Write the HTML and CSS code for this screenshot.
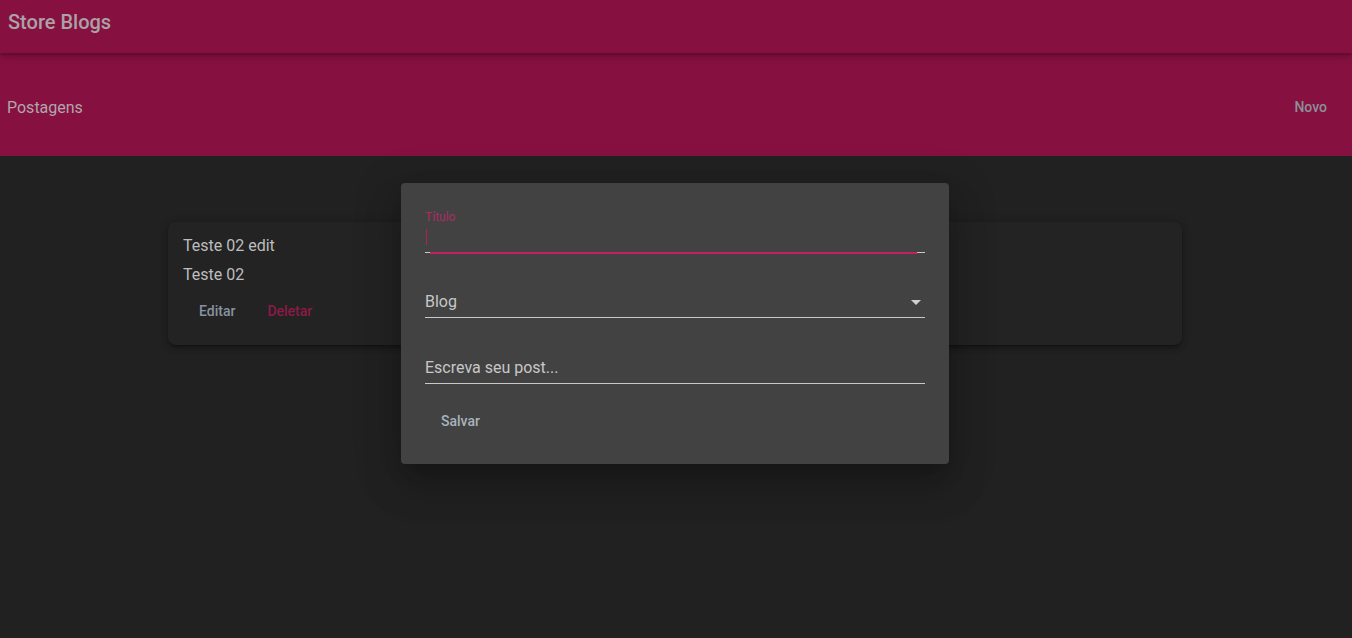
FILE: index.html
```html
<!DOCTYPE html>
<html lang="pt">
<head>
<meta charset="utf-8">
<title>Store Blogs</title>
<link rel="stylesheet" href="styles.css">
</head>
<body>
<header class="topbar">
  <span class="brand">Store Blogs</span>
</header>
<section class="subbar">
  <span class="subbar-title">Postagens</span>
  <button class="btn btn-novo">Novo</button>
</section>
<main class="content">
  <article class="card">
    <div class="card-title">Teste 02 edit</div>
    <div class="card-sub">Teste 02</div>
    <div class="card-actions">
      <button class="btn btn-edit">Editar</button>
      <button class="btn btn-delete">Deletar</button>
    </div>
  </article>
</main>
<div class="dialog">
  <div class="field field-title">
    <label class="field-label">Título</label>
    <div class="field-input">
      <span class="cursor"></span>
      <span class="ripple"></span>
    </div>
  </div>
  <div class="field field-select">
    <span class="field-value">Blog</span>
    <span class="arrow"></span>
  </div>
  <div class="field field-text">
    <span class="field-value">Escreva seu post...</span>
  </div>
  <div class="dialog-actions">
    <button class="btn btn-save">Salvar</button>
  </div>
</div>
</body>
</html>
```
FILE: styles.css
```css
* { box-sizing: border-box; }
html, body { margin: 0; padding: 0; }
body {
  background: #212121;
  font-family: Roboto, "Liberation Sans", sans-serif;
  width: 1352px;
  height: 638px;
  overflow: hidden;
  position: relative;
}
.btn {
  background: none;
  border: 0;
  font-family: Roboto, "Liberation Sans", sans-serif;
  font-size: 14px;
  font-weight: 500;
  height: 36px;
  padding: 0 16px;
  cursor: pointer;
}
.topbar {
  height: 53px;
  background: #861140;
  display: flex;
  align-items: center;
  padding: 0 8px 9px;
  position: relative;
  z-index: 2;
  box-shadow: 0 2px 4px rgba(0,0,0,0.25), 0 4px 8px rgba(0,0,0,0.12);
}
.brand {
  color: #aaa2a7;
  font-size: 20px;
  font-weight: 500;
}
.subbar {
  height: 103px;
  background: #861140;
  display: flex;
  align-items: center;
  justify-content: space-between;
  padding: 6px 9px 0 7px;
}
.subbar-title {
  color: #b1a6ac;
  font-size: 16px;
}
.btn-novo { color: #8d8f98; margin-top: -2px; }
.content {
  padding: 66px 170px 0 168px;
}
.card {
  background: #232323;
  border-radius: 8px;
  padding: 12px 15px 16px;
  box-shadow: 0 3px 3px -2px rgba(0,0,0,0.3), 0 3px 6px 0 rgba(0,0,0,0.2), 0 1px 10px 0 rgba(0,0,0,0.15);
  color: #bdbdbd;
  font-size: 16px;
}
.card-title { line-height: 24px; }
.card-sub { line-height: 24px; margin-top: 5px; }
.card-actions { margin-top: 6px; display: flex; gap: 0; }
.btn-edit { color: #8893a0; }
.btn-delete { color: #8c1a46; }
.dialog {
  position: absolute;
  left: 401px;
  top: 183px;
  width: 548px;
  height: 281px;
  background: #424242;
  border-radius: 4px;
  padding: 27px 24px 0;
  box-shadow: 0 11px 15px -7px rgba(0,0,0,0.2), 0 24px 38px 3px rgba(0,0,0,0.14), 0 9px 46px 8px rgba(0,0,0,0.12);
}
.field { border-bottom: 1px solid #c8c8c8; position: relative; }
.field-label {
  display: block;
  color: #aa2d62;
  font-size: 12px;
  line-height: 14px;
}
.field-input {
  height: 28px;
  position: relative;
}
.cursor {
  position: absolute;
  left: 1px;
  top: 5px;
  width: 1px;
  height: 16px;
  background: #b31f5c;
}
.ripple {
  position: absolute;
  left: 5px;
  right: 8px;
  bottom: -2px;
  height: 2px;
  background: #c2205f;
}
.field-value {
  display: block;
  color: #c7c7c7;
  font-size: 16px;
  line-height: 20px;
}
.field-select { margin-top: 39px; padding-bottom: 5px; }
.field-text { margin-top: 40px; padding-bottom: 5px; }
.arrow {
  position: absolute;
  right: 4px;
  top: 8px;
  width: 0;
  height: 0;
  border-left: 5px solid transparent;
  border-right: 5px solid transparent;
  border-top: 5px solid #cfcfcf;
}
.dialog-actions { margin-top: 19px; }
.btn-save { color: #a9b3bc; }
```
